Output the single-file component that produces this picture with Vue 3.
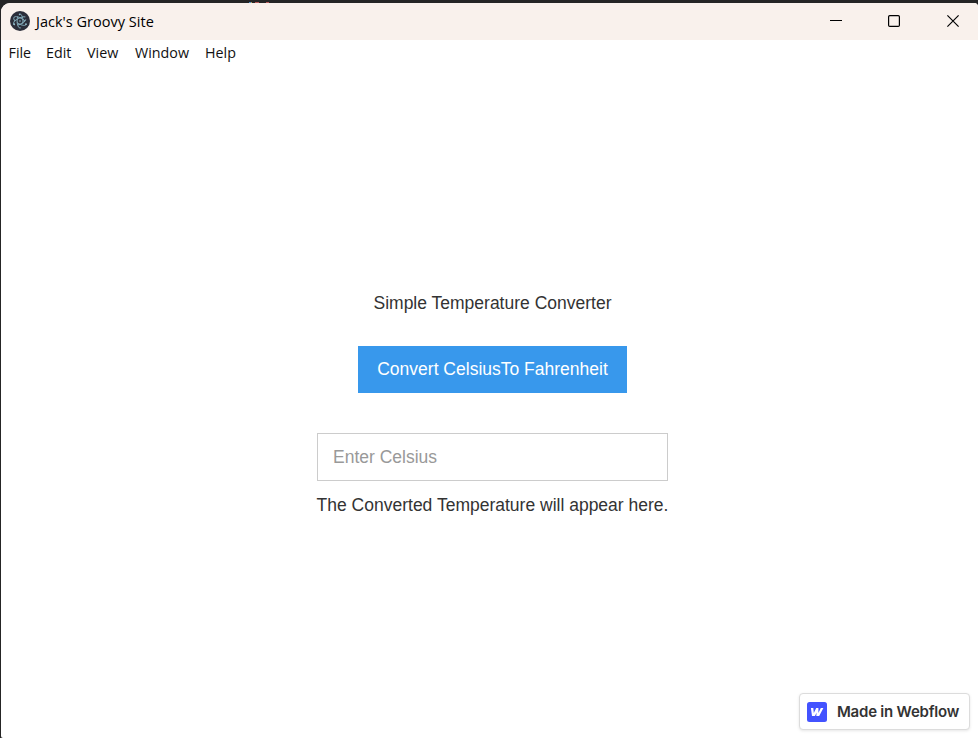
<script setup>
import { ref } from 'vue'

const menus = [
  { label: 'File', cls: 'file' },
  { label: 'Edit', cls: 'edit' },
  { label: 'View', cls: 'view' },
  { label: 'Window', cls: 'win' },
  { label: 'Help', cls: 'help' }
]
const celsius = ref('')
</script>

<template>
  <div class="desktop">
    <svg class="behind" width="300" height="3" viewBox="0 0 300 3">
      <path d="M249 2.5h2" stroke="#4a8fd0" />
      <path d="M251 2.5h1" stroke="#b5a45a" />
      <path d="M255 2.5h4M266 2.5h3" stroke="#b55a5a" />
    </svg>
    <div class="window">
      <header class="titlebar">
        <svg class="logo" width="20" height="20" viewBox="0 0 20 20">
          <circle cx="10" cy="10" r="10" fill="#2b2e3a" />
          <g fill="none" stroke="#84adbb" stroke-width="0.9">
            <ellipse cx="10" cy="10" rx="7" ry="2.9" transform="rotate(28 10 10)" stroke-dasharray="10 2.5 16 3" />
            <ellipse cx="10" cy="10" rx="7" ry="2.9" transform="rotate(90 10 10)" stroke-dasharray="13 3 11 4" />
            <ellipse cx="10" cy="10" rx="7" ry="2.9" transform="rotate(152 10 10)" stroke-dasharray="15 3 10 3" />
          </g>
          <g fill="#8fb8c6">
            <circle cx="10" cy="10" r="0.8" />
            <circle cx="4.2" cy="13.2" r="0.9" />
            <circle cx="15.9" cy="13.2" r="0.9" />
            <circle cx="9.6" cy="3.4" r="0.8" />
          </g>
        </svg>
        <span class="title">Jack's Groovy Site</span>
        <div class="controls">
          <svg width="12" height="12" viewBox="0 0 12 12"><path d="M0 5.5H12" stroke="#000" /></svg>
          <svg width="12" height="12" viewBox="0 0 12 12"><rect x="0.6" y="0.6" width="10.8" height="10.8" rx="1.2" fill="none" stroke="#000" stroke-width="1.2" /></svg>
          <svg width="12" height="12" viewBox="0 0 12 12"><path d="M0.4 0.4L11.6 11.6M11.6 0.4L0.4 11.6" stroke="#000" stroke-width="1.15" /></svg>
        </div>
      </header>
      <nav class="menubar">
        <span v-for="m in menus" :key="m.label" :class="m.cls">{{ m.label }}</span>
      </nav>
      <main class="page">
        <div class="heading">Simple Temperature Converter</div>
        <button class="convert">Convert CelsiusTo Fahrenheit</button>
        <input v-model="celsius" class="field" placeholder="Enter Celsius" />
        <div class="result">The Converted Temperature will appear here.</div>
      </main>
      <a class="badge">
        <svg width="20" height="20" viewBox="0 0 20 20">
          <rect width="20" height="20" rx="2.5" fill="#4353ff" />
          <path d="M16.4 6L12.2 14H9.3L9.6 10.8L7.9 14H5L3.9 6H6.3L6.8 11L9.2 6H11.4L11.4 11L13.8 6Z" fill="#fff" />
        </svg>
        <span>Made in Webflow</span>
      </a>
    </div>
  </div>
</template>

<style>
body {
  margin: 0;
  overflow: hidden;
}
</style>

<style scoped>
.desktop {
  box-sizing: border-box;
  width: 978px;
  height: 738px;
  padding-left: 1px;
  background: #252525;
}
.behind {
  display: block;
  margin-left: -1px;
}
.window {
  position: relative;
  height: 735px;
  display: flex;
  flex-direction: column;
  background: #fff;
  border-radius: 9px 4px 0 2px;
  overflow: hidden;
}
.titlebar {
  box-sizing: border-box;
  height: 37px;
  flex: none;
  display: flex;
  align-items: center;
  padding: 0 19px 0 9px;
  background: #f9f1ec;
  font: 14.5px/20px "Open Sans", sans-serif;
  color: #000;
}
.logo {
  flex: none;
  margin-top: -1px;
}
.title {
  margin: 1px 0 0 6px;
  letter-spacing: 0.02px;
  white-space: nowrap;
}
.controls {
  display: flex;
  gap: 46.5px;
  margin-left: auto;
  margin-top: -1px;
}
.controls svg {
  display: block;
}
.controls svg:nth-child(2) {
  margin: 0 0.5px 0 -0.5px;
}
.menubar {
  display: flex;
  height: 26px;
  flex: none;
  padding-left: 7.5px;
  font: 14.3px/26px "Open Sans", sans-serif;
  color: #111;
  white-space: nowrap;
}
.file { width: 37.5px; }
.edit { width: 41px; }
.view { width: 48px; }
.win { width: 70px; }
.page {
  display: flex;
  flex-direction: column;
  align-items: center;
  padding: 225px 0 0 6px;
  font: 17.5px/25px "Liberation Sans", Arial, sans-serif;
  color: #333;
  white-space: nowrap;
}
.convert {
  width: 269px;
  height: 47px;
  margin: 30px 0 40px;
  padding: 0;
  border: 0;
  background: #3898ec;
  color: #fff;
  font: inherit;
}
.field {
  box-sizing: border-box;
  width: 351px;
  height: 48px;
  padding: 0 15px;
  border: 1px solid #ccc;
  border-radius: 0;
  background: #fff;
  color: #333;
  font: inherit;
}
.field::placeholder {
  color: #999;
}
.result {
  margin-top: 12px;
}
.badge {
  position: absolute;
  right: 8px;
  bottom: 8px;
  box-sizing: border-box;
  width: 171px;
  height: 37px;
  display: flex;
  align-items: center;
  gap: 10px;
  padding-left: 7px;
  border: 1px solid #dcdcdc;
  border-radius: 4px;
  background: #fff;
  box-shadow: 0 1px 3px rgba(0, 0, 0, 0.1);
  color: #333;
  font: 600 15px/20px Inter, sans-serif;
  letter-spacing: -0.22px;
  white-space: nowrap;
}
</style>
